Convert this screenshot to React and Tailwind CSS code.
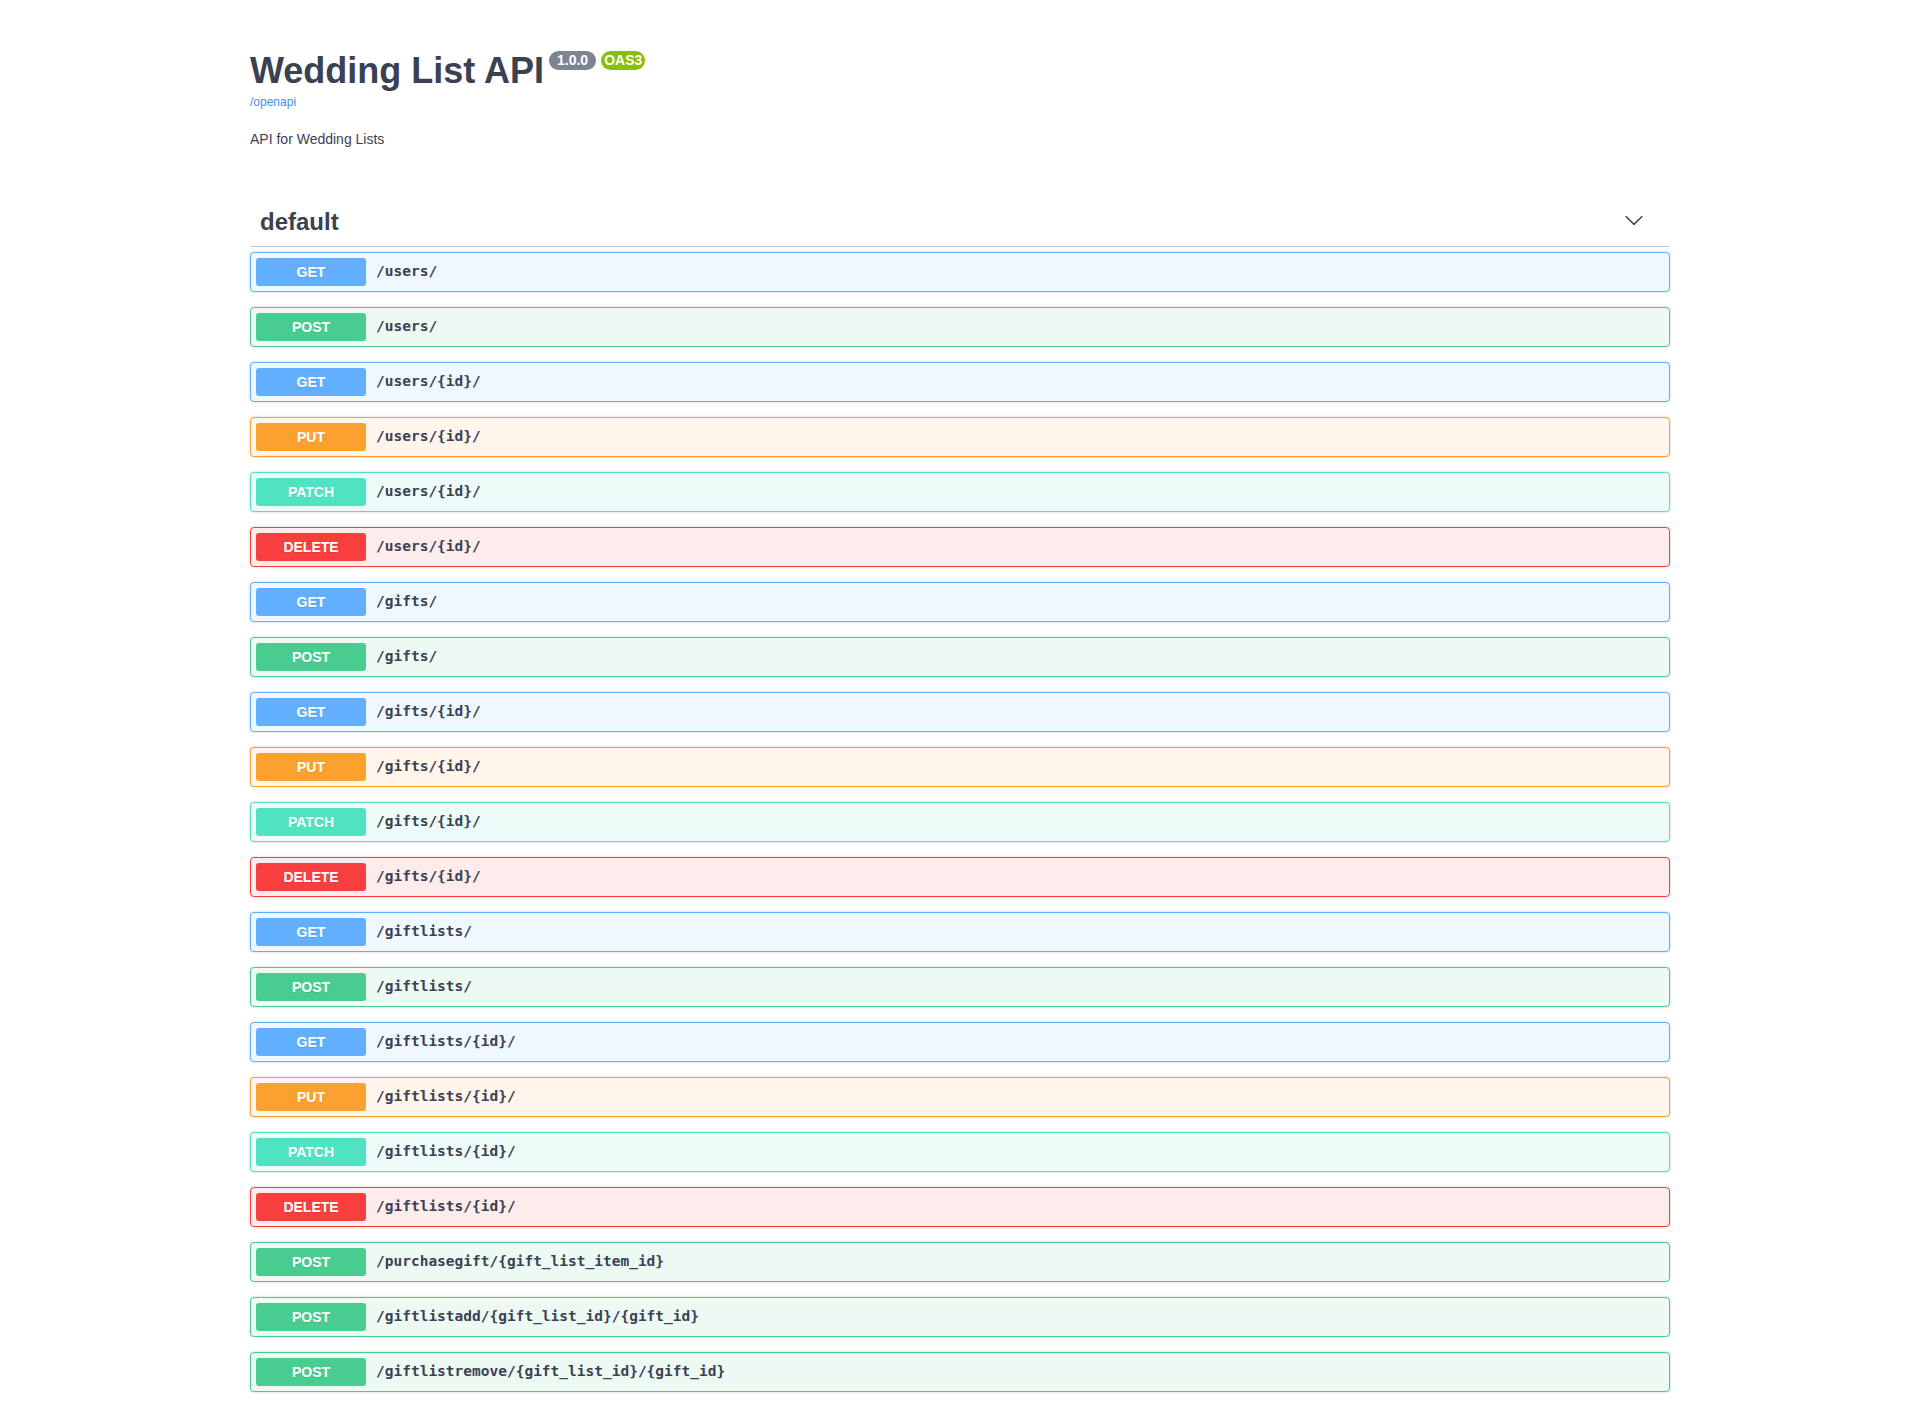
import React from 'react';

// Method colours, as Swagger UI draws them
const METHOD_STYLES = {
  GET:    { badge: 'bg-[#61affe]', block: 'bg-[#eff7ff] border-[#61affe]' },
  POST:   { badge: 'bg-[#49cc90]', block: 'bg-[#edfaf4] border-[#49cc90]' },
  PUT:    { badge: 'bg-[#fca130]', block: 'bg-[#fff5ea] border-[#fca130]' },
  PATCH:  { badge: 'bg-[#50e3c2]', block: 'bg-[#edfcf9] border-[#50e3c2]' },
  DELETE: { badge: 'bg-[#f93e3e]', block: 'bg-[#feecec] border-[#f93e3e]' },
};

const ENDPOINTS = [
  ['GET', '/users/'],
  ['POST', '/users/'],
  ['GET', '/users/{id}/'],
  ['PUT', '/users/{id}/'],
  ['PATCH', '/users/{id}/'],
  ['DELETE', '/users/{id}/'],
  ['GET', '/gifts/'],
  ['POST', '/gifts/'],
  ['GET', '/gifts/{id}/'],
  ['PUT', '/gifts/{id}/'],
  ['PATCH', '/gifts/{id}/'],
  ['DELETE', '/gifts/{id}/'],
  ['GET', '/giftlists/'],
  ['POST', '/giftlists/'],
  ['GET', '/giftlists/{id}/'],
  ['PUT', '/giftlists/{id}/'],
  ['PATCH', '/giftlists/{id}/'],
  ['DELETE', '/giftlists/{id}/'],
  ['POST', '/purchasegift/{gift_list_item_id}'],
  ['POST', '/giftlistadd/{gift_list_id}/{gift_id}'],
  ['POST', '/giftlistremove/{gift_list_id}/{gift_id}'],
];

const Operation = ({ method, path }) => {
  const s = METHOD_STYLES[method];
  return (
    <div className={`mb-[15px] border rounded-[4px] shadow-[0_0_3px_rgba(0,0,0,0.19)] ${s.block}`}>
      <div className="flex items-center p-[5px] cursor-pointer">
        <span
          className={`min-w-[80px] w-[110px] px-[15px] py-[6px] rounded-[3px] text-center text-white text-[14px] leading-[16px] font-bold [text-shadow:0_1px_0_rgba(0,0,0,0.1)] ${s.badge}`}
        >
          {method}
        </span>
        <span className="px-[10px] text-[14.5px] font-bold text-[#3b4151] font-['DejaVu_Sans_Mono',monospace]">
          {path}
        </span>
      </div>
    </div>
  );
};

const Chevron = () => (
  <svg width="20" height="20" viewBox="0 0 20 20" className="fill-[#3b4151]">
    <path d="M17.418 6.109c.272-.268.709-.268.979 0s.271.701 0 .969l-7.908 7.83c-.27.268-.707.268-.979 0l-7.908-7.83c-.27-.268-.27-.701 0-.969.271-.268.709-.268.979 0L10 13.25l7.418-7.141z" />
  </svg>
);

const App = () => (
  <div className="min-h-screen bg-white text-[#3b4151] font-['Liberation_Sans',Arial,sans-serif]">
    <div className="max-w-[1460px] mx-auto px-5 pb-[7px]">
      {/* ── Info ── */}
      <div className="pt-[50px]">
        <div className="flex items-start">
          <h2 className="text-[36px] leading-[41px] font-bold text-[#3b4151]">Wedding List API</h2>
          <span className="ml-[5px] mt-[1px] h-[19px] px-2 rounded-full bg-[#7d8492] text-white text-[14px] font-bold leading-[19px]">
            1.0.0
          </span>
          <span className="ml-[5px] mt-[1px] h-[19px] px-[3px] rounded-full bg-[#89bf04] text-white text-[14px] font-bold leading-[19px]">
            OAS3
          </span>
        </div>
        <a className="block text-[12px] leading-[14px] mt-[4px] text-[#4990e2]">/openapi</a>
        <p className="mt-[22px] text-[14px] leading-[16px] text-[#3b4151]">API for Wedding Lists</p>
      </div>

      {/* ── Tag ── */}
      <div className="mt-[51px]">
        <div className="flex items-center justify-between pl-[10px] pr-[20px] py-[10px] border-b border-[rgba(59,65,81,0.3)] mb-[5px]">
          <h3 className="text-[24px] leading-[28px] font-bold text-[#3b4151]">default</h3>
          <button className="mr-[6px] mb-[5px] flex items-center">
            <Chevron />
          </button>
        </div>

        {ENDPOINTS.map(([method, path], i) => (
          <Operation key={i} method={method} path={path} />
        ))}
      </div>
    </div>
  </div>
);

export default App;
